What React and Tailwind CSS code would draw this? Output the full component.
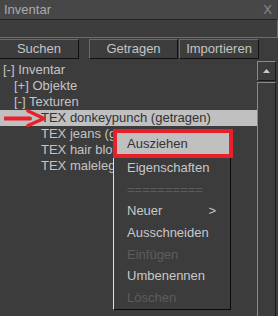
import React from 'react';

const font = { fontFamily: '"Liberation Sans", Arial, sans-serif' };

function RedArrow() {
  return (
    <svg className="absolute left-[4px] top-[109px]" width="42" height="18" viewBox="0 0 42 18">
      <path d="M1 9.5 L26 9.5" stroke="#e8202a" strokeWidth="4" strokeLinecap="round" />
      <path d="M24 2 L40 9.5 L24 16.5" fill="none" stroke="#e8202a" strokeWidth="3.5" strokeLinejoin="round" strokeLinecap="round" />
    </svg>
  );
}

export default function App() {
  const tree = [
    { label: '[-] Inventar', pad: 'pl-[3px]' },
    { label: '[+] Objekte', pad: 'pl-[14px]' },
    { label: '[-] Texturen', pad: 'pl-[14px]' },
    { label: 'TEX donkeypunch (getragen)', pad: 'pl-[41px]', selected: true },
    { label: 'TEX jeans (getragen)', pad: 'pl-[41px]' },
    { label: 'TEX hair blonde', pad: 'pl-[41px]' },
    { label: 'TEX malelegs', pad: 'pl-[41px]' },
  ];

  const menu = [
    { label: 'Eigenschaften' },
    { label: '==========', sep: true },
    { label: 'Neuer', arrow: true },
    { label: 'Ausschneiden' },
    { label: 'Einfügen', disabled: true },
    { label: 'Umbenennen' },
    { label: 'Löschen', disabled: true },
  ];

  return (
    <div className="relative w-[278px] h-[316px] overflow-hidden bg-[#3c3c3c] text-[13px] leading-[16px]" style={font}>
      {/* title bar */}
      <div className="h-[19px] bg-[#474747] flex items-center justify-between pl-[4px] pr-[6px] text-[#ababab]">
        <span>Inventar</span>
        <span className="text-[#8a8a8a]">X</span>
      </div>

      {/* search field */}
      <div className="h-[19px] border-t border-t-[#222] border-b border-b-[#6c6c6c] border-r border-r-[#6c6c6c] bg-[#3d3d3d]" />

      {/* tab buttons */}
      <div className="flex h-[21px] mt-[1px] text-[#c4c4c4]">
        <div className="w-[79px] h-[20px] flex items-center justify-center border-t border-t-[#6a6a6a] border-r border-r-[#111] border-b border-b-[#111] bg-[#3d3d3d]">Suchen</div>
        <div className="w-[10px]" />
        <div className="w-[89px] h-[20px] flex items-center justify-center border-l border-l-[#6a6a6a] border-t border-t-[#6a6a6a] border-r border-r-[#111] border-b border-b-[#111] bg-[#3d3d3d]">Getragen</div>
        <div className="w-[1px]" />
        <div className="w-[80px] h-[20px] flex items-center justify-center border-l border-l-[#6a6a6a] border-t border-t-[#6a6a6a] border-r border-r-[#111] border-b border-b-[#111] bg-[#3d3d3d]">Importieren</div>
      </div>

      {/* tree + scrollbar */}
      <div className="flex mt-[1px]">
        <div className="w-[257px] pt-[1px]">
          {tree.map((t) => (
            <div
              key={t.label}
              className={`h-[16px] whitespace-nowrap ${t.pad} ${t.selected ? 'bg-[#c0c0c0] text-[#333]' : 'text-[#c4c4c4]'}`}
            >
              {t.label}
            </div>
          ))}
        </div>
        <div className="w-[21px] flex flex-col">
          <div className="h-[20px] w-[19px] border-t border-l border-t-[#8a8a8a] border-l-[#8a8a8a] border-r border-b border-r-[#1a1a1a] border-b-[#1a1a1a] flex items-center justify-center">
            <svg width="7" height="4" viewBox="0 0 7 4"><path d="M0 4 L3.5 0 L7 4 Z" fill="#c8c8c8" /></svg>
          </div>
          <div className="mt-[1px] w-[19px] h-[240px] border-t border-l border-t-[#8a8a8a] border-l-[#8a8a8a] border-r border-r-[#1a1a1a]" />
        </div>
      </div>

      <RedArrow />

      {/* context menu */}
      <div className="absolute left-[113px] top-[130px] w-[118px] h-[180px] bg-[#3c3c3c] border-l border-t border-l-[#e0e0e0] border-t-[#e0e0e0] border-r border-b border-r-[#0a0a0a] border-b-[#0a0a0a] pt-[4px]">
        <div className="h-[22px]" />
        {menu.map((m) => (
          <div
            key={m.label}
            className={`h-[21.7px] flex items-center pl-[13px] pr-[14px] justify-between ${m.disabled || m.sep ? 'text-[#5c5c5c]' : 'text-[#c8c8c8]'}`}
          >
            <span>{m.label}</span>
            {m.arrow && <span>&gt;</span>}
          </div>
        ))}
      </div>
      <div className="absolute left-[113px] top-[129px] w-[120px] h-[29px] border-4 border-[#e8202a] bg-[#c0c0c0] flex items-center pl-[10px] text-[#333]">
        Ausziehen
      </div>
    </div>
  );
}
